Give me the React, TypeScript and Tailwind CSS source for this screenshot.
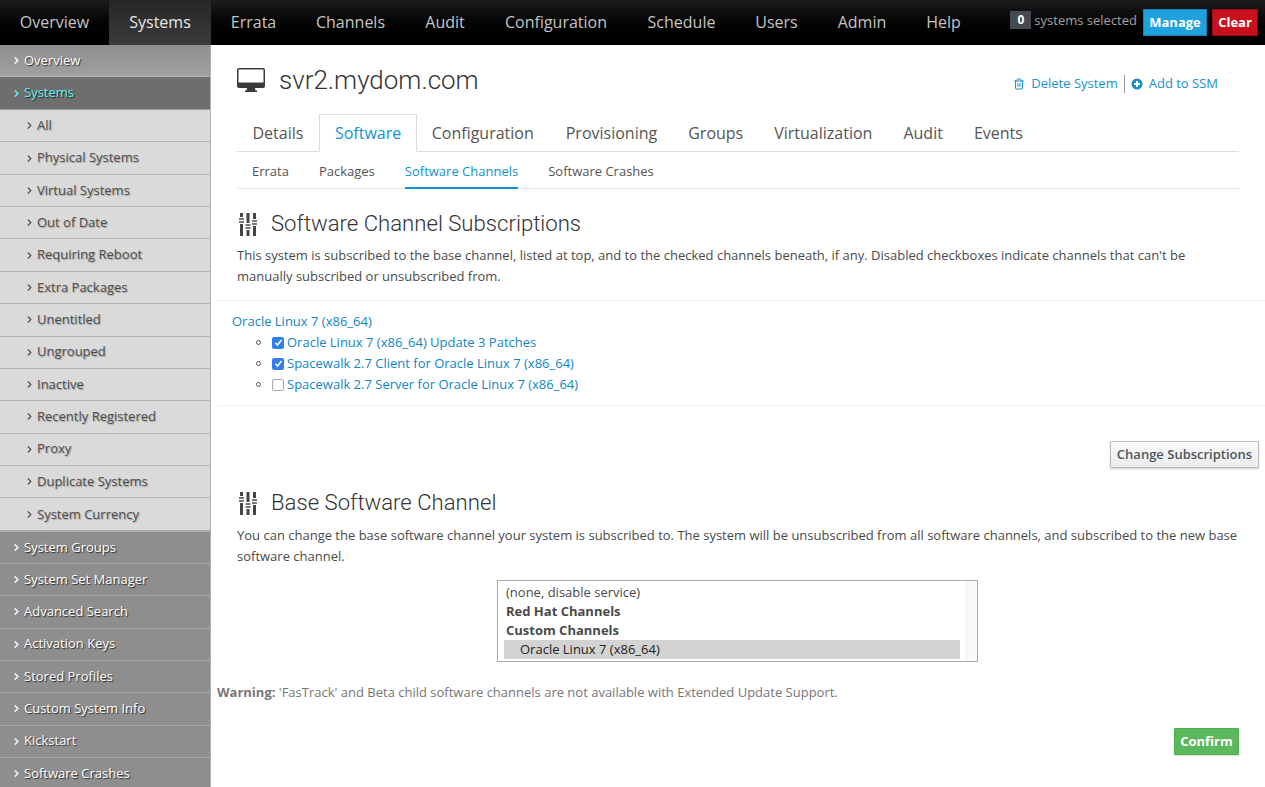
import { ChevronRight, Trash2 } from 'lucide-react'

const OPEN = "[font-family:'Open_Sans',sans-serif]"

const TOP_NAV = [
  { label: 'Overview', w: 'w-[109px]' },
  { label: 'Systems', w: 'w-[102px]', active: true },
  { label: 'Errata', w: 'w-[85px]' },
  { label: 'Channels', w: 'w-[109px]' },
  { label: 'Audit', w: 'w-[80px]' },
  { label: 'Configuration', w: 'w-[142px]' },
  { label: 'Schedule', w: 'w-[109px]' },
  { label: 'Users', w: 'w-[81px]' },
  { label: 'Admin', w: 'w-[90px]' },
  { label: 'Help', w: 'w-[73px]' },
]

const SUB_ITEMS = [
  'All',
  'Physical Systems',
  'Virtual Systems',
  'Out of Date',
  'Requiring Reboot',
  'Extra Packages',
  'Unentitled',
  'Ungrouped',
  'Inactive',
  'Recently Registered',
  'Proxy',
  'Duplicate Systems',
  'System Currency',
]

const BOTTOM_ITEMS = [
  'System Groups',
  'System Set Manager',
  'Advanced Search',
  'Activation Keys',
  'Stored Profiles',
  'Custom System Info',
  'Kickstart',
  'Software Crashes',
]

const TABS = [
  { label: 'Details', cls: 'px-[15.5px]' },
  { label: 'Software', cls: 'px-[15px]' },
  { label: 'Configuration', cls: '-ml-px px-[15.5px]' },
  { label: 'Provisioning', cls: 'ml-px px-[15.5px]' },
  { label: 'Groups', cls: 'px-[15.5px]' },
  { label: 'Virtualization', cls: 'px-[15.5px]' },
  { label: 'Audit', cls: 'px-[15.5px]' },
  { label: 'Events', cls: 'px-[15.5px]' },
]
const SUB_TABS = ['Errata', 'Packages', 'Software Channels', 'Software Crashes']

const CHANNELS = [
  { name: 'Oracle Linux 7 (x86_64) Update 3 Patches', checked: true },
  { name: 'Spacewalk 2.7 Client for Oracle Linux 7 (x86_64)', checked: true },
  { name: 'Spacewalk 2.7 Server for Oracle Linux 7 (x86_64)', checked: false },
]

function Sliders() {
  return (
    <svg width="18" height="23" viewBox="0 0 18 23">
      <g fill="#444">
        <rect x="1" y="0" width="3" height="4" />
        <rect x="1" y="11" width="3" height="12" />
        <rect x="7.5" y="0" width="3" height="10" />
        <rect x="7.5" y="17" width="3" height="6" />
        <rect x="14" y="0" width="3" height="6" />
        <rect x="14" y="13" width="3" height="10" />
      </g>
      <g fill="#777">
        <rect x="0" y="5" width="5" height="2" />
        <rect x="0" y="8" width="5" height="2" />
        <rect x="6.500" y="11" width="5" height="2" />
        <rect x="6.500" y="14" width="5" height="2" />
        <rect x="13" y="7" width="5" height="2" />
        <rect x="13" y="10" width="5" height="2" />
      </g>
    </svg>
  )
}

function Monitor() {
  return (
    <svg width="28" height="24" viewBox="0 0 28 24">
      <path
        fill="#3a3a3a"
        fillRule="evenodd"
        d="M2 0h24a2 2 0 0 1 2 2v16a2 2 0 0 1-2 2h-8l.5 2.500h1.500V24H8v-1.500h1.500L10 20H2a2 2 0 0 1-2-2V2a2 2 0 0 1 2-2zM1.500 1.500v13h25v-13z"
      />
    </svg>
  )
}

function PlusCircle() {
  return (
    <svg width="12" height="12" viewBox="0 0 12 12" className="mr-[6px]">
      <circle cx="6" cy="6" r="5.500" fill="#1a8fcf" />
      <path d="M6 3v6M3 6h6" stroke="#fff" strokeWidth="2" />
    </svg>
  )
}

function TopMenu() {
  return (
    <div className="flex h-[45px] bg-gradient-to-b from-[#1c1c1c] to-[#000000]">
      {TOP_NAV.map((item) => (
        <div
          key={item.label}
          className={`${item.w} flex items-center justify-center pb-[2px] text-base ${
            item.active ? 'bg-gradient-to-b from-[#262626] to-[#3c3c3c] text-[#e8e8e8] font-medium' : 'text-[#c4c4c4]'
          }`}
        >
          {item.label}
        </div>
      ))}
      <div className="flex flex-1 items-start justify-end pt-[9px] pr-[7px]">
        <span className="mt-[2px] flex h-[18px] w-[21px] items-center justify-center bg-[#454a50] text-[12px] font-bold text-white">0</span>
        <span className="ml-[3px] mt-[2px] text-[13px] leading-[18px] text-[#a0a0a0]">systems selected</span>
        <span className="ml-[6px] flex h-[27px] w-[64px] items-center justify-center border border-[#1a80b0] bg-[#1ea1dd] text-[13px] font-bold text-white">Manage</span>
        <span className="ml-[5px] flex h-[27px] w-[46px] items-center justify-center border border-[#9a0a14] bg-[#c8101c] text-[13px] font-bold text-white">Clear</span>
      </div>
    </div>
  )
}

function SideMenu() {
  return (
    <div className="w-[211px] shrink-0 border-r border-[#b0b0b0] bg-[#8e8e8e] text-[13px] [text-shadow:1px_1px_1px_rgba(0,0,0,0.25)]">
      <div className="flex h-[32px] items-center border-b border-[#b5b5b5] bg-gradient-to-b from-[#8f8f8f] to-[#a0a0a0] pl-[11px] font-medium text-white [text-shadow:1px_1px_1px_rgba(0,0,0,0.7)]">
        <ChevronRight size={11} strokeWidth={3} className="mr-[2px]" />
        Overview
      </div>
      <div className="flex h-[33.1px] items-center border-b border-[#9d9d9d] bg-[#6e6e6e] pl-[11px] font-medium text-[#5cf4f8] [text-shadow:1px_1px_1px_rgba(0,0,0,0.7)]">
        <ChevronRight size={11} strokeWidth={3} className="mr-[2px]" />
        Systems
      </div>
      <div className="h-[421.5px] overflow-hidden border-b-2 border-[#aaaaaa] bg-[#dadada]">
        {SUB_ITEMS.map((label) => (
          <div key={label} className="flex h-[32.35px] items-center border-b border-[#b3b3b3] pl-[24px] text-[#4d4d4d] last:border-b-0">
            <ChevronRight size={11} strokeWidth={2.5} className="mr-[2px]" />
            {label}
          </div>
        ))}
      </div>
      {BOTTOM_ITEMS.map((label) => (
        <div key={label} className="flex h-[32.33px] items-center border-b border-[#a8a8a8] pl-[11px] font-medium text-white [text-shadow:1px_1px_1px_rgba(0,0,0,0.7)]">
          <ChevronRight size={11} strokeWidth={3} className="mr-[2px]" />
          {label}
        </div>
      ))}
    </div>
  )
}

function Main() {
  return (
    <div className="flex-1 pt-[20px] text-[13px] leading-[21px] text-[#4a4a4a]">
      <div className="flex items-center justify-between pl-[26px] pr-[47px]">
        <div className="flex items-center">
          <Monitor />
          <h1 className="ml-[14px] text-[26px] leading-[30px] font-light text-[#333] [font-family:'Roboto',sans-serif]">svr2.mydom.com</h1>
        </div>
        <div className="mt-[7px] flex items-center text-[#1a8fcf]">
          <Trash2 size={12} className="mr-[6px]" />
          <span>Delete System</span>
          <span className="ml-[6px] mr-[6px] h-[18px] w-px bg-[#999]" />
          <PlusCircle />
          <span>Add to SSM</span>
        </div>
      </div>

      <div className="mx-[26px] mt-[19px] flex h-[38px] border-b border-[#dddddd] text-base">
        {TABS.map((tab) => (
          <div
            key={tab.label}
            className={`flex h-[38px] items-center ${tab.cls} ${
              tab.label === 'Software' ? 'border border-b-white border-[#dddddd] text-[#0f94d2]' : 'text-[#555]'
            }`}
          >
            {tab.label}
          </div>
        ))}
      </div>

      <div className="mx-[26px] flex h-[37px] gap-[30px] border-b border-[#e4e4e4] pl-[15px]">
        {SUB_TABS.map((tab) => (
          <div
            key={tab}
            className={`flex h-[37px] items-center border-b-2 pt-[4px] ${tab === 'Software Channels' ? 'border-[#0f94d2] text-[#0f94d2]' : 'border-transparent text-[#555]'}`}
          >
            {tab}
          </div>
        ))}
      </div>

      <div className="mt-[21px] flex items-center pl-[28px]">
        <Sliders />
        <h2 className="ml-[14px] pb-[2px] text-[22.15px] leading-[26px] font-light text-[#333] [font-family:'Roboto',sans-serif]">Software Channel Subscriptions</h2>
      </div>
      <p className="mt-[7px] pl-[26px] pr-[40px]">
        This system is subscribed to the base channel, listed at top, and to the checked channels beneath, if any. Disabled checkboxes indicate channels that can't be manually subscribed or unsubscribed from.
      </p>

      <div className="ml-[6px] mt-[13px] border-y border-[#eeeeee] pb-[10px] pl-[15px] pt-[10px]">
        <div className="text-[#0f86c4]">Oracle Linux 7 (x86_64)</div>
        <ul className="ml-[24px]">
          {CHANNELS.map((c) => (
            <li key={c.name} className="flex items-center text-[#0f86c4]">
              <span className="mr-[11px] h-[5px] w-[5px] rounded-full border border-[#555]" />
              <span
                className={`mr-[3px] flex h-[12px] w-[12px] items-center justify-center rounded-[2px] ${
                  c.checked ? 'bg-[#2f80ed]' : 'border border-[#aaa] bg-white'
                }`}
              >
                {c.checked && (
                  <svg width="9" height="9" viewBox="0 0 9 9" fill="none" stroke="#fff" strokeWidth="1.600">
                    <path d="M1.500 4.800 3.500 7 7.500 2" />
                  </svg>
                )}
              </span>
              {c.name}
            </li>
          ))}
        </ul>
      </div>

      <div className="mt-[35px] flex justify-end pr-[6px]">
        <button className="h-[27px] w-[149px] rounded-[1px] border border-[#bbb] bg-gradient-to-b from-[#fafafa] to-[#ececec] text-[13px] font-semibold text-[#4f5560] shadow-[0_1px_2px_rgba(0,0,0,0.2)]">
          Change Subscriptions
        </button>
      </div>

      <div className="mt-[21px] flex items-center pl-[28px]">
        <Sliders />
        <h2 className="ml-[14px] pb-[2px] text-[22.15px] leading-[26px] font-light text-[#333] [font-family:'Roboto',sans-serif]">Base Software Channel</h2>
      </div>
      <p className="mt-[8px] pl-[26px] pr-[20px]">
        You can change the base software channel your system is subscribed to. The system will be unsubscribed from all software channels, and subscribed to the new base software channel.
      </p>

      <div className="ml-[286px] mt-[13px] flex h-[82px] w-[481px] border border-[#aaaaaa] leading-[19px]">
        <div className="flex-1 pl-[6px] pt-[2px]">
          <div className="pl-[2px]">(none, disable service)</div>
          <div className="pl-[2px] font-bold">Red Hat Channels</div>
          <div className="pl-[2px] font-bold">Custom Channels</div>
          <div className="bg-[#d3d3d3] pl-[16px] text-[#222]">Oracle Linux 7 (x86_64)</div>
        </div>
        <div className="ml-[6px] w-[11px] border-l border-[#eeeeee] bg-[#fafafa]" />
      </div>

      <p className="mt-[20px] pl-[6px] text-[#777]">
        <strong>Warning:</strong> 'FasTrack' and Beta child software channels are not available with Extended Update Support.
      </p>

      <div className="mt-[25px] flex justify-end pr-[26px]">
        <button className="h-[27px] w-[65px] rounded-[1px] border border-[#4cae4c] bg-[#5cb85c] text-[13px] font-bold text-white shadow-[0_1px_2px_rgba(0,0,0,0.15)]">Confirm</button>
      </div>
    </div>
  )
}

export default function App() {
  return (
    <div className={`h-[787px] overflow-hidden bg-white ${OPEN}`}>
      <TopMenu />
      <div className="flex">
        <SideMenu />
        <Main />
      </div>
    </div>
  )
}
